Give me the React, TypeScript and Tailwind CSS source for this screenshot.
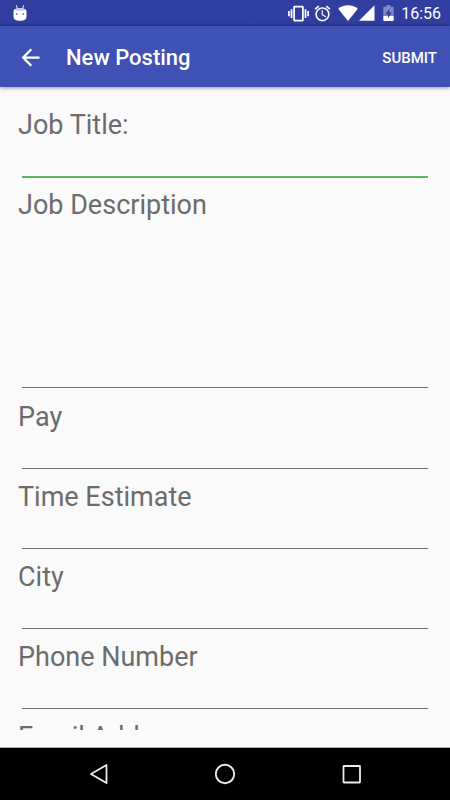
import { useState } from "react";
import { MdAlarm, MdArrowBack, MdVibration } from "react-icons/md";

type FieldProps = {
    id: string;
    label: string;
    active?: boolean;
    multiline?: boolean;
};

const FIELDS: FieldProps[] = [
    { id: "title", label: "Job Title:", active: true },
    { id: "description", label: "Job Description", multiline: true },
    { id: "pay", label: "Pay" },
    { id: "time", label: "Time Estimate" },
    { id: "city", label: "City" },
    { id: "phone", label: "Phone Number" },
    { id: "email", label: "Email Address" },
];

function DroidIcon() {
    return (
        <svg viewBox="0 0 14 17" className="h-[17px] w-[14px]" aria-hidden="true">
            <path d="M3.4 .6l1 3.400M10.600.6l-1 3.400" stroke="#c9cdea" strokeWidth="1.2" strokeLinecap="round" />
            <path d="M.5 6C.7 4.100 3 3.300 7 3.300s6.300.8 6.500 2.700v5.500c0 3-2.600 4.300-6.500 4.300S.5 14.500.5 11.500z" fill="#fff" />
            <path d="M1.200 5C2.600 4 4.500 3.700 7 3.700s4.400.3 5.800 1.300C11.200 5.800 9.500 6 7 6s-4.200-.2-5.800-1z" fill="#c9cdea" />
            <circle cx="3.800" cy="9.100" r=".8" fill="#303f9f" />
            <circle cx="10.200" cy="9.100" r=".8" fill="#303f9f" />
        </svg>
    );
}

function WifiIcon() {
    return (
        <svg viewBox="0 0 20 16" className="h-4 w-5" aria-hidden="true">
            <path d="M10 16L.2 3.800C2.600 1.600 6 .2 10 .2s7.400 1.400 9.800 3.600z" fill="#fff" />
        </svg>
    );
}

function SignalIcon() {
    return (
        <svg viewBox="0 0 16 16" className="size-4" aria-hidden="true">
            <path d="M15.500.2v15.500H0z" fill="#fff" />
        </svg>
    );
}

function BatteryIcon() {
    return (
        <svg viewBox="0 0 11 16" className="h-4 w-[11px]" aria-hidden="true">
            <path d="M3.500 0h4v1.700h2.300c.5 0 .9.4.9.9V11H.3V2.600c0-.5.4-.9.9-.9h2.300z" fill="#8089c6" />
            <path d="M.3 11h10.400v4c0 .5-.4.9-.9.9H1.200c-.5 0-.9-.4-.9-.9z" fill="#fff" />
            <path d="M6.400 3.700L2.300 9.300h2.600v3.900l4-5.700H6.400z" fill="#303f9f" />
        </svg>
    );
}

function StatusBar() {
    return (
        <div className="flex h-[26px] shrink-0 items-center bg-linear-to-b from-[#303f9f] from-85% to-[#2c3a92] pr-[9px] pl-[13px] text-white">
            <DroidIcon />
            <div className="ml-auto flex items-center">
                <MdVibration className="size-[21px]" />
                <MdAlarm className="ml-1 size-[19px]" />
                <span className="ml-1.5 flex gap-px">
                    <WifiIcon />
                    <SignalIcon />
                </span>
                <span className="ml-2">
                    <BatteryIcon />
                </span>
                <span className="ml-[7px] pt-0.5 text-base leading-5">16:56</span>
            </div>
        </div>
    );
}

function Field({ id, label, active, multiline }: FieldProps) {
    const [value, setValue] = useState("");

    return (
        <div className={multiline ? "h-[212px]" : "h-20"}>
            <label htmlFor={id} className="block text-[27px] leading-[34px] text-[#6c6c6c]">
                {label}
            </label>
            <div className="px-1">
                {multiline ? (
                    <textarea
                        id={id}
                        value={value}
                        onChange={(e) => setValue(e.target.value)}
                        className="block h-[166px] w-full resize-none border-b border-[#707070] text-lg outline-none"
                    />
                ) : (
                    <input
                        id={id}
                        type="text"
                        value={value}
                        onChange={(e) => setValue(e.target.value)}
                        className={`block w-full text-lg outline-none ${active ? "h-9 border-b-2 border-[#5cb860]" : "h-[35px] border-b border-[#707070]"}`}
                    />
                )}
            </div>
        </div>
    );
}

function NavBar() {
    return (
        <nav className="flex h-[53px] shrink-0 justify-center border-t border-[#a8acac] bg-black">
            <button type="button" aria-label="Back" className="flex w-[28%] items-center justify-center">
                <svg viewBox="0 0 22 22" className="size-[22px]" fill="none" stroke="#ececec" strokeWidth="1.8" strokeLinejoin="round">
                    <path d="M18.500 2v18L3 11z" />
                </svg>
            </button>
            <button type="button" aria-label="Home" className="flex w-[28%] items-center justify-center">
                <svg viewBox="0 0 22 22" className="size-[22px]" fill="none" stroke="#ececec" strokeWidth="1.9">
                    <circle cx="11" cy="11" r="9.200" />
                </svg>
            </button>
            <button type="button" aria-label="Recent apps" className="flex w-[28%] items-center justify-center">
                <svg viewBox="0 0 22 22" className="size-[22px]" fill="none" stroke="#ececec" strokeWidth="1.8" strokeLinejoin="round">
                    <rect x="3.500" y="3" width="16.500" height="16.500" rx=".5" />
                </svg>
            </button>
        </nav>
    );
}

export default function App() {
    return (
        <div className="flex h-screen flex-col bg-[#fafafa] font-[Roboto,sans-serif]">
            <StatusBar />
            <header className="z-10 flex h-[61px] shrink-0 items-center bg-[#3f51b5] pt-0.5 pr-[13px] pl-[17px] text-white shadow-[0_1px_4px_rgba(0,0,0,0.4)]">
                <button type="button" aria-label="Navigate up">
                    <MdArrowBack className="size-[27px]" />
                </button>
                <h1 className="ml-[22px] text-[22px] leading-7 font-medium">New Posting</h1>
                <button type="submit" form="posting" className="ml-auto text-[15px] leading-5 font-medium">
                    SUBMIT
                </button>
            </header>
            <main className="flex min-h-0 flex-1 flex-col pt-[21px] pb-[17px]">
                <form id="posting" onSubmit={(e) => e.preventDefault()} className="min-h-0 flex-1 overflow-x-hidden overflow-y-auto px-[18px] [scrollbar-width:none]">
                    {FIELDS.map((field) => (
                        <Field key={field.id} {...field} />
                    ))}
                </form>
            </main>
            <NavBar />
        </div>
    );
}
